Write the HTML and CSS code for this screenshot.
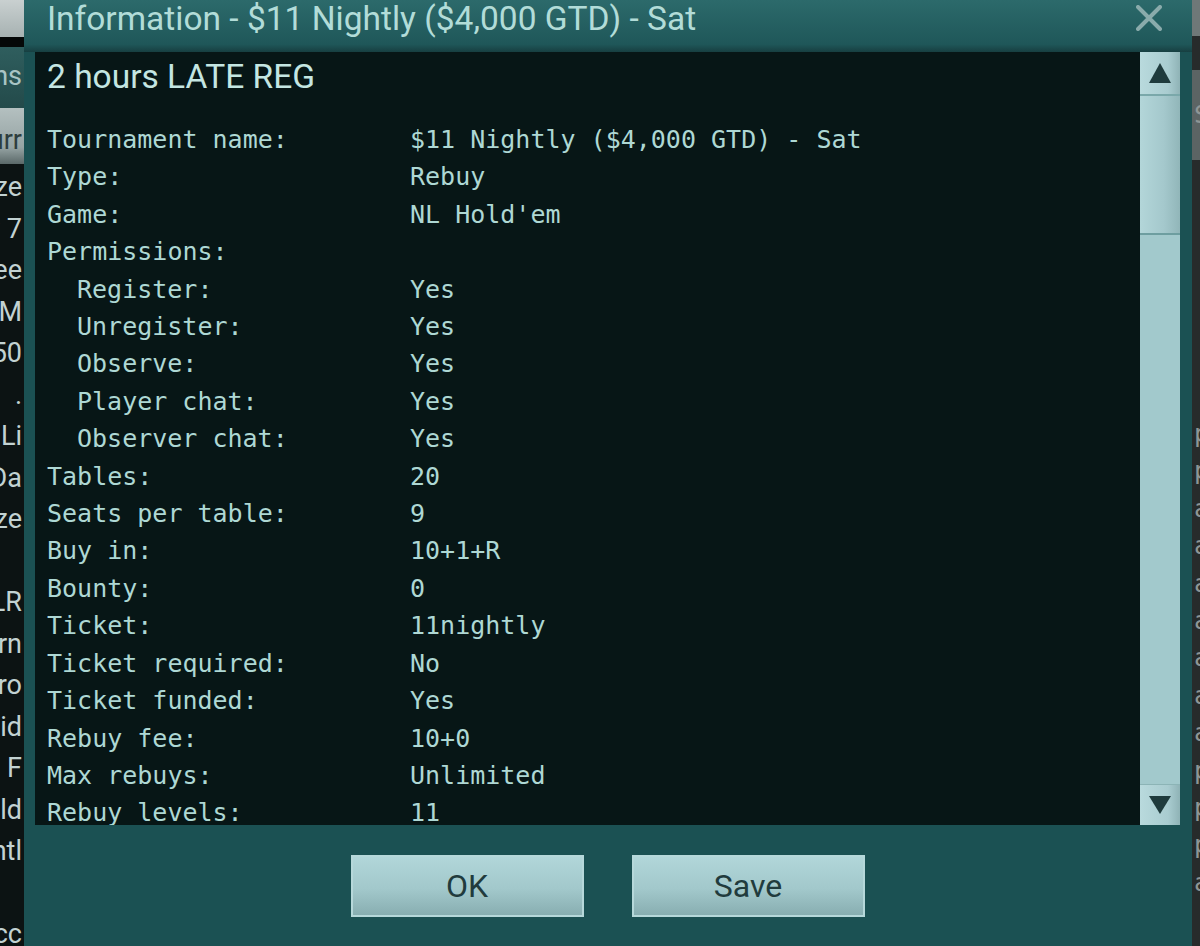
FILE: index.html
```html
<!DOCTYPE html>
<html lang="en">
<head>
    <meta charset="UTF-8">
    <meta name="viewport" content="width=device-width, initial-scale=1.0">
    <title>Tournament Information</title>
    <link rel="stylesheet" href="styles.css">
</head>
<body>
    <div class="desk">
        <!-- lobby window behind the dialog -->
        <aside class="lobby">
            <div class="lobby-top"></div>
            <div class="lobby-tab"><span>Options</span></div>
            <div class="lobby-head"><span>Curr</span></div>
            <div class="lobby-list">
                <div class="lobby-row"><span>Prize</span></div>
                <div class="lobby-row"><span>Nov 7</span></div>
                <div class="lobby-row"><span>Fee</span></div>
                <div class="lobby-row"><span>MTT M</span></div>
                <div class="lobby-row"><span>$50</span></div>
                <div class="lobby-row"><span>.</span></div>
                <div class="lobby-row"><span>No Li</span></div>
                <div class="lobby-row"><span>Da</span></div>
                <div class="lobby-row"><span>Prize</span></div>
                <div class="lobby-row"><span></span></div>
                <div class="lobby-row"><span>LR</span></div>
                <div class="lobby-row"><span>Tourn</span></div>
                <div class="lobby-row"><span>Pro</span></div>
                <div class="lobby-row"><span>Squid</span></div>
                <div class="lobby-row"><span>Mega F</span></div>
                <div class="lobby-row"><span>Hold</span></div>
                <div class="lobby-row"><span>Nightl</span></div>
                <div class="lobby-row"><span></span></div>
                <div class="lobby-row"><span>Acc</span></div>
            </div>
        </aside>

        <div class="dialog">
            <header class="titlebar">
                <span class="title">Information - $11 Nightly ($4,000 GTD) - Sat</span>
                <button class="close" type="button" aria-label="Close">
                    <svg width="26" height="26" viewBox="0 0 26 26">
                        <path d="M2 2 L24 24 M24 2 L2 24" stroke="#8aabab" stroke-width="4" stroke-linecap="round"/>
                    </svg>
                </button>
            </header>

            <div class="dialog-body">
                <div class="pane">
                    <div class="pane-content">
                        <h1 class="late-reg">2 hours LATE REG</h1>
                        <dl class="info">
                            <dt>Tournament name:</dt><dd>$11 Nightly ($4,000 GTD) - Sat</dd>
                            <dt>Type:</dt><dd>Rebuy</dd>
                            <dt>Game:</dt><dd>NL Hold'em</dd>
                            <dt>Permissions:</dt><dd></dd>
                            <dt class="sub">Register:</dt><dd>Yes</dd>
                            <dt class="sub">Unregister:</dt><dd>Yes</dd>
                            <dt class="sub">Observe:</dt><dd>Yes</dd>
                            <dt class="sub">Player chat:</dt><dd>Yes</dd>
                            <dt class="sub">Observer chat:</dt><dd>Yes</dd>
                            <dt>Tables:</dt><dd>20</dd>
                            <dt>Seats per table:</dt><dd>9</dd>
                            <dt>Buy in:</dt><dd>10+1+R</dd>
                            <dt>Bounty:</dt><dd>0</dd>
                            <dt>Ticket:</dt><dd>11nightly</dd>
                            <dt>Ticket required:</dt><dd>No</dd>
                            <dt>Ticket funded:</dt><dd>Yes</dd>
                            <dt>Rebuy fee:</dt><dd>10+0</dd>
                            <dt>Max rebuys:</dt><dd>Unlimited</dd>
                            <dt>Rebuy levels:</dt><dd>11</dd>
                            <dt>Add-on:</dt><dd>10+0</dd>
                        </dl>
                    </div>
                    <div class="scrollbar">
                        <div class="scroll-btn">
                            <svg width="22" height="20" viewBox="0 0 22 20"><path d="M11 0 L22 20 L0 20 Z" fill="#1f3b3d"/></svg>
                        </div>
                        <div class="scroll-thumb"></div>
                        <div class="scroll-track"></div>
                        <div class="scroll-btn down">
                            <svg width="22" height="18" viewBox="0 0 22 18"><path d="M0 0 L22 0 L11 18 Z" fill="#1f3b3d"/></svg>
                        </div>
                    </div>
                </div>

                <div class="actions">
                    <button type="button" class="btn">OK</button>
                    <button type="button" class="btn">Save</button>
                </div>
            </div>
        </div>

        <!-- table list peeking out on the right -->
        <aside class="side">
            <div class="side-top"></div>
            <div class="side-head">S</div>
            <div class="side-list">
                <div>p</div><div>p</div><div>a</div><div>a</div><div>a</div><div>a</div>
                <div>a</div><div>a</div><div>a</div><div>p</div><div>p</div><div>p</div><div>a</div>
            </div>
        </aside>
    </div>
</body>
</html>
```

FILE: styles.css
```css
body{
    margin: 0;
    background-color: #0c1212;
    overflow: hidden;
}
.desk{
    display: flex;
    height: 946px;
    width: 1200px;
}

/* lobby behind, left side */
.lobby{
    width: 24px;
    flex-shrink: 0;
    background-color: #0c1313;
    display: flex;
    flex-direction: column;
    overflow: hidden;
    font-family: Roboto, "Liberation Sans", sans-serif;
    font-size: 27px;
    color: #c2d2d2;
}
.lobby > *{
    flex-shrink: 0;
}
.lobby-top{
    height: 37px;
    background: linear-gradient(#c9d0d0, #a7b2b2);
    border-bottom: 10px solid #050808;
}
.lobby-tab,
.lobby-head,
.lobby-row{
    display: flex;
    justify-content: flex-end;
    white-space: nowrap;
    overflow: hidden;
}
.lobby-tab{
    height: 61px;
    line-height: 58px;
    background: linear-gradient(#2f5e5e, #234a4a);
    color: #a9c4c4;
}
.lobby-head{
    height: 56px;
    line-height: 64px;
    background: linear-gradient(#b4c0c0, #96a4a4 70%, #5a6868);
    color: #2d3d3d;
}
.lobby-list{
    padding-top: 3px;
}
.lobby-row{
    height: 41.5px;
    line-height: 41.5px;
}
.lobby-row span,
.lobby-tab span,
.lobby-head span{
    flex-shrink: 0;
    margin-right: 2px;
}

/* dialog */
.dialog{
    width: 1168px;
    flex-shrink: 0;
    display: flex;
    flex-direction: column;
    background-color: #1b5153;
}
.titlebar{
    height: 52px;
    flex-shrink: 0;
    display: flex;
    justify-content: space-between;
    align-items: flex-start;
    padding: 0 30px 0 23px;
    background: linear-gradient(#2c6a6b, #1f5759 85%, #173f41);
}
.title{
    font-family: Roboto, "Liberation Sans", sans-serif;
    font-size: 33.5px;
    line-height: 38px;
    color: #b2dcd8;
}
.close{
    margin-top: 5px;
    padding: 0;
    border: none;
    background: none;
    width: 26px;
    height: 26px;
    cursor: pointer;
}
.close svg{
    display: block;
}
.dialog-body{
    flex: 1;
    display: flex;
    flex-direction: column;
    padding: 0 12px 0 11px;
}
.pane{
    height: 773px;
    display: flex;
}
.pane-content{
    flex: 1;
    background-color: #071616;
    padding: 6px 0 0 12px;
    overflow: hidden;
    color: #aed8d4;
}
.late-reg{
    margin: 0;
    font-family: Roboto, "Liberation Sans", sans-serif;
    font-weight: normal;
    font-size: 33.5px;
    line-height: 38px;
    color: #c4e6e2;
}
.info{
    margin: 25px 0 0;
    display: grid;
    grid-template-columns: 363px auto;
    font-family: "DejaVu Sans Mono", "Liberation Mono", monospace;
    font-size: 25px;
    line-height: 37.4px;
    white-space: pre;
}
.info dt,
.info dd{
    margin: 0;
    min-height: 37.4px;
}
.info .sub{
    padding-left: 30px;
}

/* scrollbar */
.scrollbar{
    width: 40px;
    display: flex;
    flex-direction: column;
    background-color: #a2c9cc;
}
.scroll-btn{
    height: 42px;
    display: flex;
    justify-content: center;
    align-items: center;
    background: linear-gradient(90deg, #b9dadd, #a9ccd0 70%, #8fb3b6);
    border-bottom: 2px solid #7aa8aa;
}
.scroll-btn.down{
    height: 40px;
    border-bottom: none;
    border-top: 1px solid #8cb4b6;
}
.scroll-thumb{
    height: 137px;
    background: linear-gradient(90deg, #b3d6d9, #a4c8cc 60%, #91b6b9);
    border-bottom: 2px solid #6e9ea0;
}
.scroll-track{
    flex: 1;
    background-color: #a2c9cc;
}

/* buttons */
.actions{
    display: flex;
    justify-content: center;
    gap: 48px;
    padding-top: 30px;
}
.btn{
    width: 233px;
    height: 62px;
    border: 2px solid #b6d8da;
    background: linear-gradient(#b1d6d9, #a2c8cb 55%, #88aeb1);
    font-family: Roboto, "Liberation Sans", sans-serif;
    font-size: 32px;
    color: #213b3d;
    cursor: pointer;
}
.btn:hover{
    background: linear-gradient(#bfe0e2, #aed2d5 55%, #94b9bc);
}

/* right side strip */
.side{
    flex: 1;
    background-color: #272b2b;
    overflow: hidden;
    font-family: "DejaVu Sans Mono", monospace;
    font-size: 25px;
    color: #8e9696;
}
.side-top{
    height: 36px;
    background-color: #6f7878;
}
.side-head{
    height: 90px;
    margin-top: 34px;
    line-height: 90px;
    background-color: #5c6464;
    padding-left: 2px;
}
.side-list{
    padding-top: 255px;
    padding-left: 2px;
    line-height: 37.4px;
}
```
